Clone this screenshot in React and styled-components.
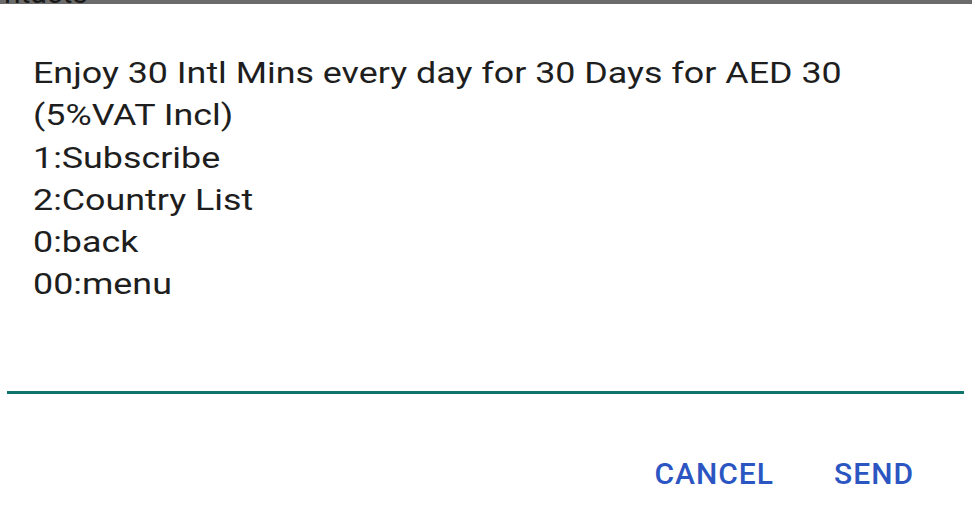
import React from "react";
import styled, { createGlobalStyle } from "styled-components";

const Global = createGlobalStyle`
  html, body { margin: 0; padding: 0; background: #ffffff; }
  body { font-family: Roboto, "Noto Sans", sans-serif; width: 972px; height: 532px; overflow: hidden; }
`;

const Dialog = styled.div`
  width: 972px;
  height: 532px;
  background: #ffffff;
  display: flex;
  flex-direction: column;
  overflow: hidden;
`;

const TopStrip = styled.div`
  height: 4px;
  flex-shrink: 0;
  background: #6b6b6b;
  display: flex;
  align-items: flex-end;
  overflow: hidden;
  padding-left: 4px;
`;

const StripText = styled.span`
  font-size: 30px;
  line-height: 0.72;
  color: #1a1a1a;
`;

const Field = styled.div`
  margin: 48px 8px 0 7px;
  height: 342px;
  flex-shrink: 0;
  border-bottom: 3px solid #0f7470;
  box-sizing: border-box;
  padding-left: 26px;
`;

const Message = styled.div`
  width: fit-content;
  font-size: 30px;
  line-height: 42.3px;
  color: #1e1e1e;
  white-space: pre;
  transform: scaleX(1.194);
  transform-origin: left top;
`;

const Actions = styled.div`
  display: flex;
  justify-content: flex-end;
  gap: 60px;
  margin-top: 62px;
  padding-right: 58px;
`;

const ActionButton = styled.button`
  border: none;
  background: none;
  padding: 0;
  font-family: Roboto, "Noto Sans", sans-serif;
  font-weight: 500;
  font-size: 30px;
  line-height: 36px;
  letter-spacing: 1px;
  color: #2b56c2;
  text-transform: uppercase;
  cursor: pointer;
`;

const lines = [
  "Enjoy 30 Intl Mins every day for 30 Days for AED 30",
  "(5%VAT Incl)",
  "1:Subscribe",
  "2:Country List",
  "0:back",
  "00:menu",
];

export default function App() {
  return (
    <Dialog>
      <Global />
      <TopStrip>
        <StripText>ntacts</StripText>
      </TopStrip>
      <Field>
        <Message>{lines.join("\n")}</Message>
      </Field>
      <Actions>
        <ActionButton>Cancel</ActionButton>
        <ActionButton>Send</ActionButton>
      </Actions>
    </Dialog>
  );
}
